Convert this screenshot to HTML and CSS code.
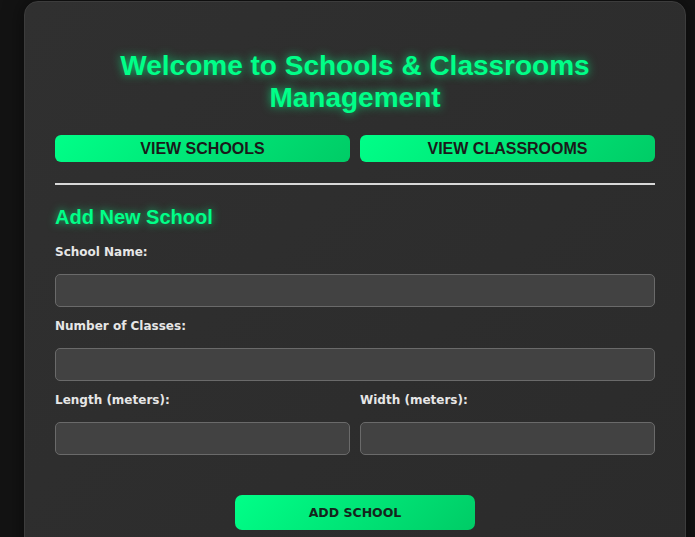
FILE: index.html
```html
<!DOCTYPE html>
<html>
<head>
<meta charset="utf-8">
<link rel="stylesheet" href="styles.css">
</head>
<body>
<div class="card">
  <h1 class="title">Welcome to Schools &amp; Classrooms Management</h1>
  <div class="nav">
    <button class="btn">VIEW SCHOOLS</button>
    <button class="btn">VIEW CLASSROOMS</button>
  </div>
  <hr class="rule">
  <h2 class="subtitle">Add New School</h2>
  <form class="form">
    <div class="field">
      <label class="label">School Name:</label>
      <input class="input" type="text">
    </div>
    <div class="field">
      <label class="label">Number of Classes:</label>
      <input class="input" type="text">
    </div>
    <div class="row">
      <div class="field">
        <label class="label">Length (meters):</label>
        <input class="input" type="text">
      </div>
      <div class="field">
        <label class="label">Width (meters):</label>
        <input class="input" type="text">
      </div>
    </div>
    <div class="actions">
      <button type="button" class="submit">ADD SCHOOL</button>
    </div>
  </form>
</div>
</body>
</html>
```
FILE: styles.css
```css
html, body {
  margin: 0;
  padding: 0;
  background: #131313;
  height: 100%;
  overflow: hidden;
}
body {
  padding-top: 1px;
  font-family: "Liberation Sans", Arial, sans-serif;
}
.card {
  box-sizing: border-box;
  width: 662px;
  margin-left: 24px;
  padding: 48px 30px 40px;
  border: 1px solid #3c3c3c;
  border-radius: 14px;
  background: linear-gradient(135deg, #303030 0%, #2b2b2b 100%);
  box-shadow: 0 0 20px rgba(0, 0, 0, 0.5);
}
.title {
  margin: 0;
  text-align: center;
  font-size: 28px;
  line-height: 32px;
  font-weight: bold;
  color: #00ff88;
  text-shadow: 0 0 10px rgba(0, 255, 136, 0.75);
}
.nav {
  display: grid;
  grid-template-columns: 1fr 1fr;
  gap: 10px;
  margin-top: 21px;
}
.btn {
  height: 27px;
  border: none;
  border-radius: 6px;
  background: linear-gradient(135deg, #00ff88 0%, #00cc66 100%);
  color: #1a1a1a;
  font-family: "Liberation Sans", Arial, sans-serif;
  font-weight: bold;
  font-size: 16px;
  padding: 0;
}
.rule {
  margin: 21px 0 0;
  border: none;
  height: 2px;
  background: #d8d8d8;
}
.subtitle {
  margin: 20px 0 0;
  font-size: 20px;
  line-height: 24px;
  font-weight: bold;
  color: #00ff88;
  text-shadow: 0 0 8px rgba(0, 255, 136, 0.7);
}
.form {
  margin-top: 16px;
}
.field {
  display: flex;
  flex-direction: column;
}
.label {
  font-family: "DejaVu Sans", Verdana, sans-serif;
  font-weight: bold;
  font-size: 12px;
  line-height: 15px;
  color: #e6e6e6;
  margin-bottom: 14px;
}
.input {
  box-sizing: border-box;
  height: 33px;
  border: 1px solid #6a6a6a;
  border-radius: 5px;
  background: #424242;
  margin-bottom: 12px;
}
.row {
  display: grid;
  grid-template-columns: 1fr 1fr;
  gap: 10px;
}
.actions {
  display: flex;
  justify-content: center;
  margin-top: 28px;
}
.submit {
  width: 240px;
  height: 35px;
  border: none;
  border-radius: 7px;
  background: linear-gradient(135deg, #00ff88 0%, #00cc66 100%);
  color: #15251c;
  font-family: "DejaVu Sans", Verdana, sans-serif;
  font-weight: bold;
  font-size: 12.5px;
}
```
